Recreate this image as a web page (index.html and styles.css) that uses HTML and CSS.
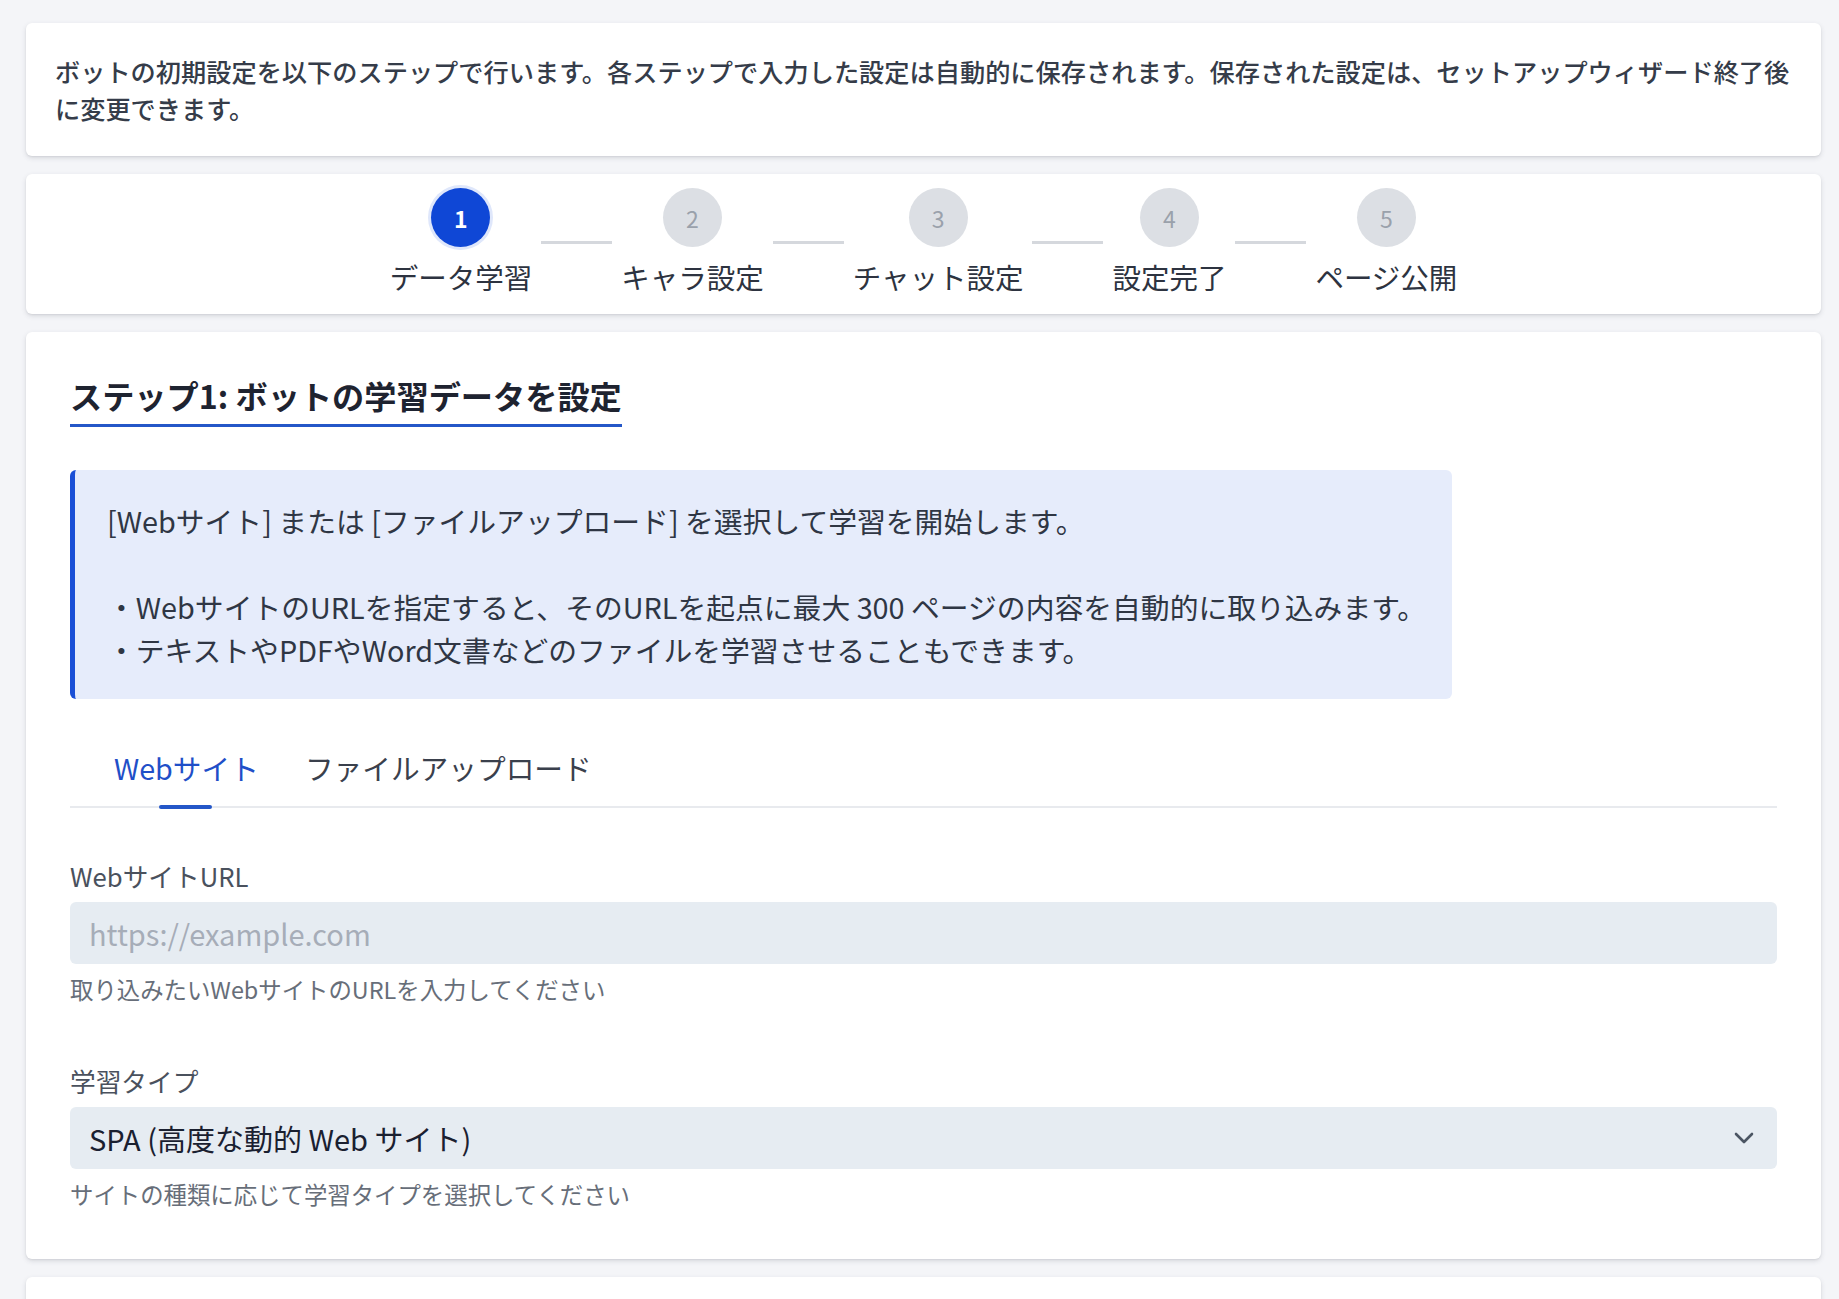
FILE: index.html
```html
<!DOCTYPE html>
<html lang="ja">
<head>
<meta charset="utf-8">
<title>セットアップウィザード</title>
<link rel="stylesheet" href="styles.css">
</head>
<body>
<div class="page">
  <section class="card intro">
    <p>ボットの初期設定を以下のステップで行います。各ステップで入力した設定は自動的に保存されます。保存された設定は、セットアップウィザード終了後に変更できます。</p>
  </section>

  <section class="card stepper">
    <div class="steps">
      <div class="step active"><span class="dot">1</span><span class="label">データ学習</span></div>
      <span class="conn"></span>
      <div class="step"><span class="dot">2</span><span class="label">キャラ設定</span></div>
      <span class="conn"></span>
      <div class="step"><span class="dot">3</span><span class="label">チャット設定</span></div>
      <span class="conn"></span>
      <div class="step"><span class="dot">4</span><span class="label">設定完了</span></div>
      <span class="conn"></span>
      <div class="step"><span class="dot">5</span><span class="label">ページ公開</span></div>
    </div>
  </section>

  <section class="card main">
    <h2 class="title">ステップ1: ボットの学習データを設定</h2>

    <div class="info">
      <p>[Webサイト] または [ファイルアップロード] を選択して学習を開始します。</p>
      <p class="gap">・WebサイトのURLを指定すると、そのURLを起点に最大 300 ページの内容を自動的に取り込みます。</p>
      <p>・テキストやPDFやWord文書などのファイルを学習させることもできます。</p>
    </div>

    <div class="tabs">
      <span class="tab active">Webサイト</span>
      <span class="tab">ファイルアップロード</span>
    </div>

    <div class="field">
      <label class="flabel">WebサイトURL</label>
      <div class="input placeholder">https://example.com</div>
      <div class="help">取り込みたいWebサイトのURLを入力してください</div>
    </div>

    <div class="field second">
      <label class="flabel">学習タイプ</label>
      <div class="input select">
        <span>SPA (高度な動的 Web サイト)</span>
        <svg class="chev" width="22" height="14" viewBox="0 0 22 14"><path d="M3 3 L11 11 L19 3" fill="none" stroke="#4b5563" stroke-width="2.6" stroke-linecap="round" stroke-linejoin="round"/></svg>
      </div>
      <div class="help">サイトの種類に応じて学習タイプを選択してください</div>
    </div>
  </section>

  <section class="card next"></section>
</div>
</body>
</html>
```

FILE: styles.css
```css
* { box-sizing: border-box; }
html, body { margin: 0; padding: 0; }
body {
  background: #f4f5f8;
  font-family: "Noto Sans CJK JP", "Noto Sans", sans-serif;
  color: #2b3240;
  height: 1299px;
  overflow: hidden;
}
p { margin: 0; }
.page {
  padding: 23px 18px 0 26px;
  display: flex;
  flex-direction: column;
  gap: 18px;
}
.card {
  background: #ffffff;
  border-radius: 6px;
  box-shadow: 0 2px 5px rgba(60, 66, 87, 0.16), 0 1px 2px rgba(0,0,0,0.06);
  width: 1795px;
}
.intro {
  padding: 30px 29px 29px;
  font-size: 25.2px;
  letter-spacing: 0.02px;
  line-height: 37px;
  font-weight: 500;
  color: #353c49;
}
.stepper {
  padding: 14px 0 18px;
  display: flex;
  justify-content: center;
}
.steps {
  display: flex;
  align-items: center;
}
.step {
  display: flex;
  flex-direction: column;
  align-items: center;
  gap: 11px;
}
.dot {
  width: 59px;
  height: 59px;
  border-radius: 50%;
  background: #dcdfe4;
  color: #9aa1ab;
  font-size: 23px;
  display: flex;
  align-items: center;
  justify-content: center;
}
.step.active .dot {
  background: #0f47d6;
  color: #ffffff;
  font-weight: 700;
  box-shadow: 0 0 0 3px #dfe7fb;
}
.label {
  font-size: 28.5px;
  line-height: 38px;
  color: #2d3340;
}
.conn {
  width: 71px;
  height: 3px;
  background: #d5d8dd;
  margin: 0 9px;
}
.main {
  padding: 41px 44px 49px;
}
.title {
  display: inline-block;
  margin: 0;
  font-size: 32.2px;
  line-height: 44px;
  font-weight: 700;
  color: #1e2330;
  padding-bottom: 7px;
  border-bottom: 3px solid #2457c8;
}
.info {
  margin-top: 43px;
  width: 1382px;
  background: #e6ecfb;
  border-left: 5px solid #1a4fd6;
  border-radius: 6px;
  padding: 29px 12px 28px 32px;
  font-size: 28.8px;
  line-height: 43px;
  color: #2f3644;
}
.info p { white-space: nowrap; }
.info .gap { margin-top: 43px; }
.tabs {
  margin-top: 49px;
  display: flex;
  gap: 46px;
  padding-left: 44px;
  border-bottom: 2px solid #e8eaee;
}
.tab {
  font-size: 28.7px;
  line-height: 40px;
  padding-bottom: 18px;
  color: #3a404c;
  position: relative;
}
.tab.active {
  color: #1f4fc8;
}
.tab.active::after {
  content: "";
  position: absolute;
  left: 45px;
  bottom: -3px;
  width: 53px;
  height: 4px;
  border-radius: 2px;
  background: #2457c8;
}
.field { margin-top: 51px; }
.field.second { margin-top: 59px; }
.flabel {
  display: block;
  font-size: 25.7px;
  line-height: 34px;
  color: #4a515d;
  margin-bottom: 9px;
}
.input {
  height: 62px;
  border-radius: 6px;
  background: #e6ecf2;
  padding: 0 19px;
  font-size: 29px;
  display: flex;
  align-items: center;
  color: #1a2030;
}
.placeholder { color: #a6adb8; }
.select { justify-content: space-between; padding-right: 22px; }
.help {
  margin-top: 9px;
  font-size: 23.4px;
  line-height: 32px;
  color: #676e79;
}
.next { height: 60px; }
```
